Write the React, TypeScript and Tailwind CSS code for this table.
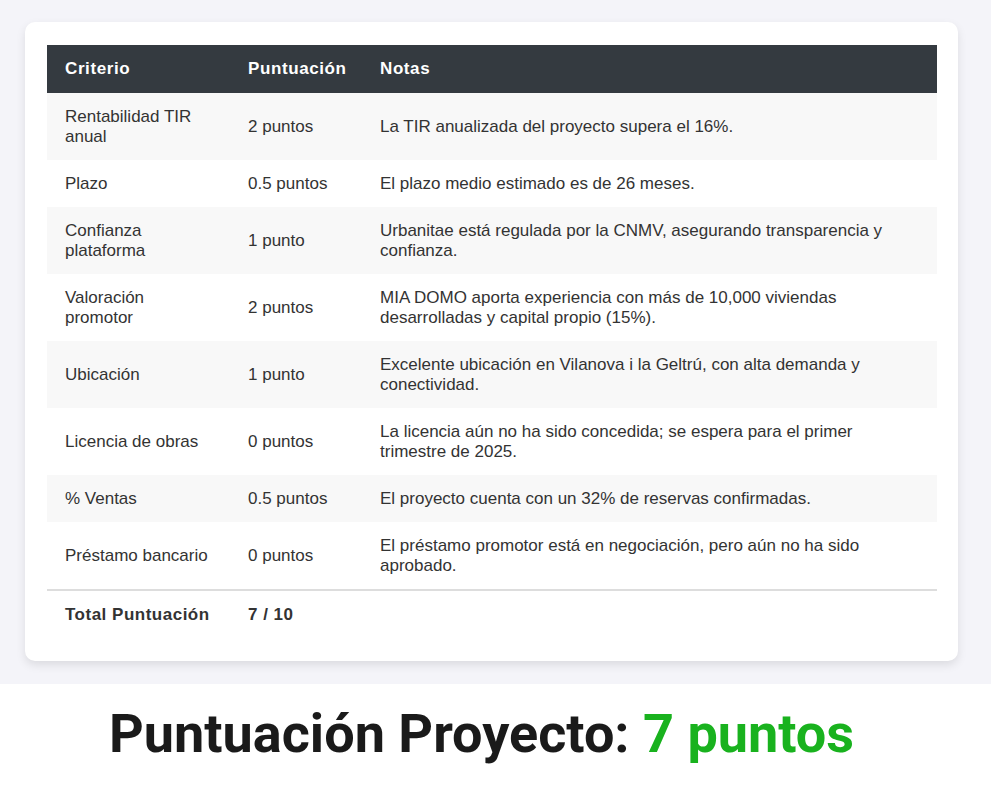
import React from "react";

const rows: [string, string, string][] = [
  ["Rentabilidad TIR anual", "2 puntos", "La TIR anualizada del proyecto supera el 16%."],
  ["Plazo", "0.5 puntos", "El plazo medio estimado es de 26 meses."],
  ["Confianza plataforma", "1 punto", "Urbanitae está regulada por la CNMV, asegurando transparencia y confianza."],
  ["Valoración promotor", "2 puntos", "MIA DOMO aporta experiencia con más de 10,000 viviendas desarrolladas y capital propio (15%)."],
  ["Ubicación", "1 punto", "Excelente ubicación en Vilanova i la Geltrú, con alta demanda y conectividad."],
  ["Licencia de obras", "0 puntos", "La licencia aún no ha sido concedida; se espera para el primer trimestre de 2025."],
  ["% Ventas", "0.5 puntos", "El proyecto cuenta con un 32% de reservas confirmadas."],
  ["Préstamo bancario", "0 puntos", "El préstamo promotor está en negociación, pero aún no ha sido aprobado."],
];

export default function App() {
  return (
    <div className="w-[991px] min-h-[795px] bg-white">
      <div className="bg-[#f4f4f9] pt-[22px] pb-[23px] pl-[25px]">
        <div
          className="w-[933px] bg-white rounded-[10px] shadow-[0_4px_10px_rgba(0,0,0,0.1)] px-[22px] py-[23px] text-[17px] text-[#333]"
          style={{ fontFamily: '"Liberation Sans", Arial, sans-serif' }}
        >
          <table className="w-[890px] border-collapse table-fixed">
            <colgroup>
              <col className="w-[183px]" />
              <col className="w-[132px]" />
              <col />
            </colgroup>
            <thead>
              <tr className="bg-[#343a40] text-white">
                <th className="text-left font-bold px-[18px] py-[14px] leading-[20px] tracking-[0.6px]">Criterio</th>
                <th className="text-left font-bold px-[18px] py-[14px] leading-[20px] tracking-[0.6px]">Puntuación</th>
                <th className="text-left font-bold px-[18px] py-[14px] leading-[20px] tracking-[0.6px]">Notas</th>
              </tr>
            </thead>
            <tbody>
              {rows.map((r, i) => (
                <tr key={i} className={i % 2 === 0 ? "bg-[#f8f8f8]" : "bg-white"}>
                  <td className="px-[18px] py-[13.5px] leading-[20px] align-middle">{r[0]}</td>
                  <td className="px-[18px] py-[13.5px] leading-[20px] align-middle">{r[1]}</td>
                  <td className="px-[18px] py-[13.5px] leading-[20px] align-middle">{r[2]}</td>
                </tr>
              ))}
              <tr className="border-t-2 border-[#dddddd] font-bold tracking-[0.5px]">
                <td className="px-[18px] py-[13.5px] leading-[20px]">Total Puntuación</td>
                <td className="px-[18px] py-[13.5px] leading-[20px]">7 / 10</td>
                <td className="px-[18px] py-[13.5px] leading-[20px]"></td>
              </tr>
            </tbody>
          </table>
        </div>
      </div>
      <div className="pt-[17px] pb-[29px] pl-[109px]">
        <h1
          className="text-[54px] font-bold text-[#1a1a1a] leading-[66px] whitespace-nowrap"
          style={{ fontFamily: 'Roboto, "Noto Sans", sans-serif' }}
        >
          Puntuación Proyecto: <span className="text-[#19b21e]">7 puntos</span>
        </h1>
      </div>
    </div>
  );
}
